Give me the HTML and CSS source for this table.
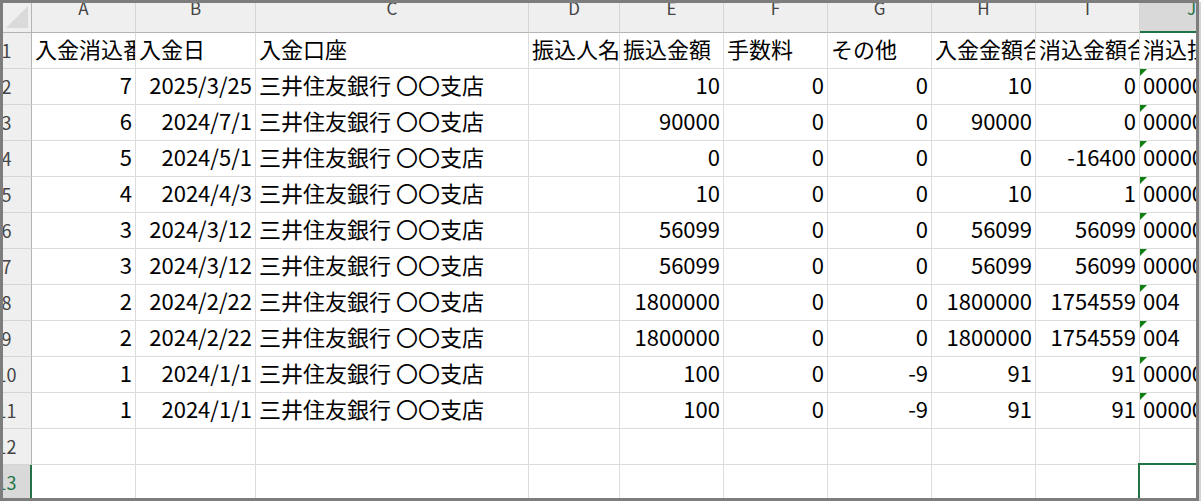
FILE: index.html
```html
<!DOCTYPE html>
<html lang="ja">
<head>
<meta charset="utf-8">
<title>Sheet</title>
<link rel="stylesheet" href="styles.css">
</head>
<body>
<div class="frame">
  <div class="sheet">
    <div class="corner"><span class="corner-tri"></span></div>
    <div class="ch"><span>A</span></div>
    <div class="ch"><span>B</span></div>
    <div class="ch"><span>C</span></div>
    <div class="ch"><span>D</span></div>
    <div class="ch"><span>E</span></div>
    <div class="ch"><span>F</span></div>
    <div class="ch"><span>G</span></div>
    <div class="ch"><span>H</span></div>
    <div class="ch"><span>I</span></div>
    <div class="ch sel"><span>J</span></div>

    <div class="rh"><span>1</span></div>
    <div class="c">入金消込番号</div>
    <div class="c">入金日</div>
    <div class="c">入金口座</div>
    <div class="c">振込人名</div>
    <div class="c">振込金額</div>
    <div class="c">手数料</div>
    <div class="c">その他</div>
    <div class="c">入金金額合計</div>
    <div class="c">消込金額合計</div>
    <div class="c">消込担当者</div>

    <div class="rh"><span>2</span></div>
    <div class="c n">7</div>
    <div class="c n">2025/3/25</div>
    <div class="c">三井住友銀行 〇〇支店</div>
    <div class="c"></div>
    <div class="c n">10</div>
    <div class="c n">0</div>
    <div class="c n">0</div>
    <div class="c n">10</div>
    <div class="c n">0</div>
    <div class="c t">0000001</div>

    <div class="rh"><span>3</span></div>
    <div class="c n">6</div>
    <div class="c n">2024/7/1</div>
    <div class="c">三井住友銀行 〇〇支店</div>
    <div class="c"></div>
    <div class="c n">90000</div>
    <div class="c n">0</div>
    <div class="c n">0</div>
    <div class="c n">90000</div>
    <div class="c n">0</div>
    <div class="c t">0000001</div>

    <div class="rh"><span>4</span></div>
    <div class="c n">5</div>
    <div class="c n">2024/5/1</div>
    <div class="c">三井住友銀行 〇〇支店</div>
    <div class="c"></div>
    <div class="c n">0</div>
    <div class="c n">0</div>
    <div class="c n">0</div>
    <div class="c n">0</div>
    <div class="c n">-16400</div>
    <div class="c t">0000001</div>

    <div class="rh"><span>5</span></div>
    <div class="c n">4</div>
    <div class="c n">2024/4/3</div>
    <div class="c">三井住友銀行 〇〇支店</div>
    <div class="c"></div>
    <div class="c n">10</div>
    <div class="c n">0</div>
    <div class="c n">0</div>
    <div class="c n">10</div>
    <div class="c n">1</div>
    <div class="c t">0000001</div>

    <div class="rh"><span>6</span></div>
    <div class="c n">3</div>
    <div class="c n">2024/3/12</div>
    <div class="c">三井住友銀行 〇〇支店</div>
    <div class="c"></div>
    <div class="c n">56099</div>
    <div class="c n">0</div>
    <div class="c n">0</div>
    <div class="c n">56099</div>
    <div class="c n">56099</div>
    <div class="c t">0000001</div>

    <div class="rh"><span>7</span></div>
    <div class="c n">3</div>
    <div class="c n">2024/3/12</div>
    <div class="c">三井住友銀行 〇〇支店</div>
    <div class="c"></div>
    <div class="c n">56099</div>
    <div class="c n">0</div>
    <div class="c n">0</div>
    <div class="c n">56099</div>
    <div class="c n">56099</div>
    <div class="c t">0000001</div>

    <div class="rh"><span>8</span></div>
    <div class="c n">2</div>
    <div class="c n">2024/2/22</div>
    <div class="c">三井住友銀行 〇〇支店</div>
    <div class="c"></div>
    <div class="c n">1800000</div>
    <div class="c n">0</div>
    <div class="c n">0</div>
    <div class="c n">1800000</div>
    <div class="c n">1754559</div>
    <div class="c t">004</div>

    <div class="rh"><span>9</span></div>
    <div class="c n">2</div>
    <div class="c n">2024/2/22</div>
    <div class="c">三井住友銀行 〇〇支店</div>
    <div class="c"></div>
    <div class="c n">1800000</div>
    <div class="c n">0</div>
    <div class="c n">0</div>
    <div class="c n">1800000</div>
    <div class="c n">1754559</div>
    <div class="c t">004</div>

    <div class="rh"><span>10</span></div>
    <div class="c n">1</div>
    <div class="c n">2024/1/1</div>
    <div class="c">三井住友銀行 〇〇支店</div>
    <div class="c"></div>
    <div class="c n">100</div>
    <div class="c n">0</div>
    <div class="c n">-9</div>
    <div class="c n">91</div>
    <div class="c n">91</div>
    <div class="c t">0000001</div>

    <div class="rh"><span>11</span></div>
    <div class="c n">1</div>
    <div class="c n">2024/1/1</div>
    <div class="c">三井住友銀行 〇〇支店</div>
    <div class="c"></div>
    <div class="c n">100</div>
    <div class="c n">0</div>
    <div class="c n">-9</div>
    <div class="c n">91</div>
    <div class="c n">91</div>
    <div class="c t">0000001</div>

    <div class="rh"><span>12</span></div>
    <div class="c"></div>
    <div class="c"></div>
    <div class="c"></div>
    <div class="c"></div>
    <div class="c"></div>
    <div class="c"></div>
    <div class="c"></div>
    <div class="c"></div>
    <div class="c"></div>
    <div class="c"></div>

    <div class="rh sel"><span>13</span></div>
    <div class="c"></div>
    <div class="c"></div>
    <div class="c"></div>
    <div class="c"></div>
    <div class="c"></div>
    <div class="c"></div>
    <div class="c"></div>
    <div class="c"></div>
    <div class="c"></div>
    <div class="c cur"></div>
  </div>
</div>
</body>
</html>
```
FILE: styles.css
```css
html, body {
  margin: 0;
  padding: 0;
  background: #ffffff;
}

.frame {
  width: 1199px;
  height: 501px;
  box-sizing: border-box;
  border: 3px solid #7d7d7d;
  overflow: hidden;
  background: #ffffff;
  box-shadow: 2px 2px 0 #d4d4d4;
}

.sheet {
  display: grid;
  grid-template-columns: 29px 104px 120px 273px 91px 104px 104px 104px 104px 104px 104px;
  grid-template-rows: 30px repeat(13, 36px);
  font-family: "Noto Sans CJK JP", "Noto Sans", sans-serif;
  color: #000;
}

.corner {
  background: #efefef;
  border-right: 1px solid #b4b4b4;
  border-bottom: 1px solid #b4b4b4;
  box-sizing: border-box;
  display: flex;
  align-items: flex-end;
  justify-content: flex-end;
  padding: 0 3px 4px 0;
}

.corner-tri {
  width: 0;
  height: 0;
  border-bottom: 22px solid #dadada;
  border-left: 22px solid transparent;
}

.ch {
  background: #efefef;
  border-right: 1px solid #d5d5d5;
  border-bottom: 1px solid #b4b4b4;
  box-sizing: border-box;
  display: flex;
  justify-content: center;
  align-items: flex-start;
  overflow: hidden;
  color: #444;
  font-size: 17px;
}

.ch span {
  line-height: 17px;
  margin-top: -4px;
}

.ch.sel {
  background: #d9d9d9;
  border-bottom: 2px solid #217346;
  color: #217346;
}

.rh {
  background: #efefef;
  border-right: 1px solid #b4b4b4;
  border-bottom: 1px solid #d5d5d5;
  box-sizing: border-box;
  display: flex;
  align-items: center;
  overflow: hidden;
  color: #444;
  font-size: 18px;
  padding-bottom: 2px;
}

.rh span {
  flex: none;
  width: 39px;
  margin-left: -16px;
  text-align: center;
}

.rh.sel {
  background: #d9d9d9;
  border-right: 2px solid #217346;
  color: #217346;
}

.c {
  border-right: 1px solid #dcdcdc;
  border-bottom: 1px solid #dcdcdc;
  box-sizing: border-box;
  display: flex;
  align-items: center;
  padding: 0 3px 6px 3px;
  overflow: hidden;
  white-space: nowrap;
  font-size: 22px;
  position: relative;
}

.c.n {
  justify-content: flex-end;
}

.c.t::before {
  content: "";
  position: absolute;
  top: 0;
  left: 0;
  width: 0;
  height: 0;
  border-top: 7px solid #0f7f12;
  border-right: 7px solid transparent;
}

.c.cur {
  outline: 2px solid #217346;
  outline-offset: 0;
}
```
